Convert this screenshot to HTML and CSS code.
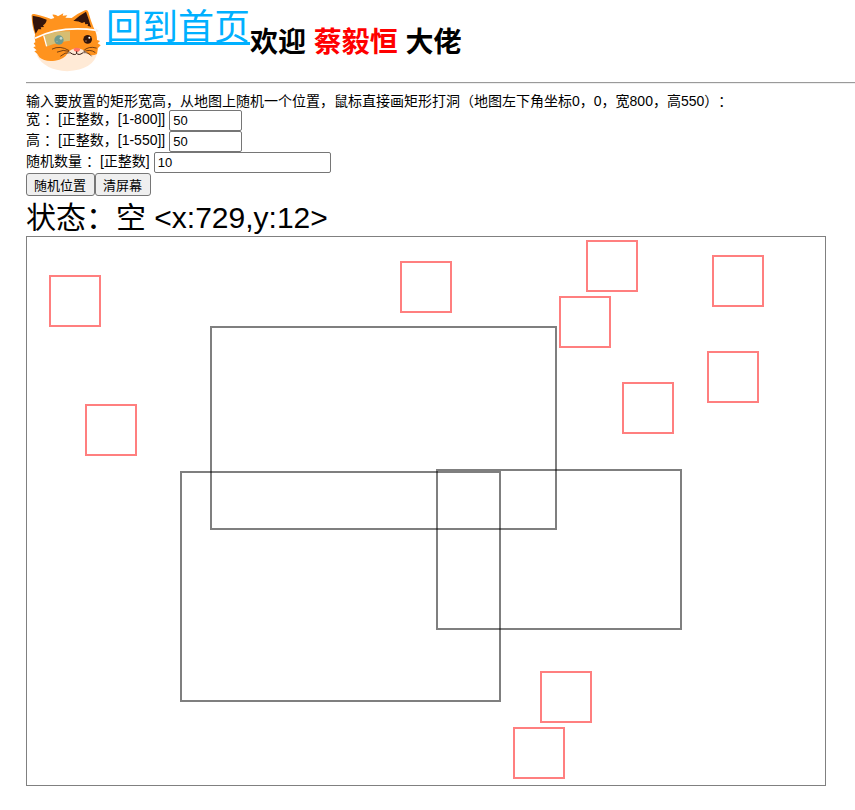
FILE: index.html
```html
<!DOCTYPE html>
<html lang="zh-CN">
<head>
<meta charset="utf-8">
<title>随机矩形</title>
<link rel="stylesheet" href="styles.css">
</head>
<body>
<header class="header">
  <svg class="avatar" viewBox="18 0 240 240" aria-hidden="true">
    <path fill="#ffead6" d="M50 165Q62 150 150 142Q220 140 231 160Q222 208 142 214Q72 210 50 165Z"/>
    <path fill="#ff931e" d="M35 50Q33 40 43 42Q75 50 93 57L103 54L97 44Q108 43 114 49L130 40L128 47L142 46L136 53L155 54Q170 42 195 31Q202 28 205 36Q213 65 221 83Q231 100 231 120L240 123L233 130L242 136L234 144L231 162Q215 170 204 162Q190 146 170 145Q151 147 144 158Q133 178 105 182Q74 186 58 172L52 162L43 154L50 151L40 142L47 139L41 130L46 127Q43 112 45 103Q36 80 35 50Z"/>
    <path fill="#35150c" d="M38 47Q60 50 80 59Q79 70 69 76L72 81L62 82L64 88L55 88L47 101Q37 72 38 47ZM160 63Q178 46 198 35Q208 61 213 82Q208 78 203 78L204 72L196 73L194 66L186 69Q175 62 160 63Z"/>
    <circle cx="203" cy="118" r="13" fill="#30150c"/><circle cx="208" cy="113" r="3" fill="#fff"/><circle cx="198" cy="123" r="2" fill="#b98f70"/>
    <path fill="#d7bd72" d="M72 107Q109 91 150 94V122Q117 125 82 139Z"/>
    <circle cx="117" cy="120" r="14" fill="#6f9b90"/><circle cx="123" cy="115" r="4" fill="#c9d8cc"/><circle cx="111" cy="124" r="2" fill="#a5bcb0"/>
    <path d="M45 115Q120 76 231 91" fill="none" stroke="#fff" stroke-width="5"/>
    <path d="M71 106L80 139" stroke="#fff" stroke-width="4"/>
    <path d="M226 84L237 93L229 97Z" fill="#f5f1f4"/>
    <path fill="#ff7468" d="M160 146Q170 141 181 146Q180 154 170 156Q161 154 160 146Z"/>
    <g fill="none" stroke="#30150c" stroke-linecap="round"><path stroke-width="3" d="M170 155V160Q165 168 152 159M170 160Q176 168 188 159"/><path stroke-width="2" d="M97 147Q120 135 146 151M112 156Q130 147 147 154M122 168Q134 156 151 158M191 152Q205 137 229 144M192 155Q210 146 225 157M191 158Q206 156 214 168"/></g>
  </svg>
  <a class="home" href="#">回到首页</a>
  <h1 class="welcome">欢迎 <span class="name">蔡毅恒</span> 大佬</h1>
</header>
<hr class="divider">
<main>
  <p class="intro">输入要放置的矩形宽高，从地图上随机一个位置，鼠标直接画矩形打洞（地图左下角坐标0，0，宽800，高550）：</p>
  <div class="row"><label for="w">宽 ：[正整数，[1-800]]</label><input class="field short" id="w" type="text" value="50"></div>
  <div class="row"><label for="h">高 ：[正整数，[1-550]]</label><input class="field short" id="h" type="text" value="50"></div>
  <div class="row"><label for="n">随机数量 ：[正整数]</label><input class="field" id="n" type="text" value="10"></div>
  <div class="actions"><button class="btn" type="button">随机位置</button><button class="btn" type="button">清屏幕</button></div>
  <p class="status">状态：空 &lt;x:729,y:12&gt;</p>
  <svg class="map" viewBox="0 0 800 550">
    <rect class="frame" x="0.5" y="0.5" width="799" height="549"/>
    <g class="holes">
      <rect x="185" y="91" width="345" height="202"/>
      <rect x="155" y="236" width="319" height="229"/>
      <rect x="411" y="234" width="244" height="159"/>
    </g>
    <g class="placed">
      <rect x="24" y="40" width="50" height="50"/>
      <rect x="375" y="26" width="50" height="50"/>
      <rect x="561" y="5" width="50" height="50"/>
      <rect x="534" y="61" width="50" height="50"/>
      <rect x="687" y="20" width="50" height="50"/>
      <rect x="682" y="116" width="50" height="50"/>
      <rect x="597" y="147" width="50" height="50"/>
      <rect x="60" y="169" width="50" height="50"/>
      <rect x="515" y="436" width="50" height="50"/>
      <rect x="488" y="492" width="50" height="50"/>
    </g>
  </svg>
</main>
</body>
</html>
```
FILE: styles.css
```css
body {
  margin: 0;
  padding-left: 26px;
  background: #fff;
  color: #000;
  font: 14px/18px "Liberation Sans", "Noto Sans CJK SC", sans-serif;
  text-spacing-trim: space-all;
}
.header {
  display: flex;
  align-items: flex-start;
  height: 82px;
}
.avatar {
  width: 80px;
  height: 80px;
  flex: none;
}
.home {
  margin-top: 4px;
  color: #00b0ff;
  font-size: 36px;
  font-weight: 400;
  line-height: 48px;
  text-decoration: underline;
  text-decoration-thickness: 3px;
  text-decoration-skip-ink: none;
}
.welcome {
  margin: 24px 0 0;
  font-size: 28px;
  line-height: 38px;
}
.name { color: #f00; }
.divider {
  margin: 0 0 8px;
  border: 0 solid #eee;
  border-top: 1px solid #9a9a9a;
  border-bottom-width: 1px;
}
.intro { margin: 0; }
.row {
  display: flex;
  align-items: flex-start;
  gap: 4px;
  height: 21px;
}
.field {
  box-sizing: border-box;
  width: 177px;
  height: 21px;
  margin: 0;
  padding: 1px 3px;
  border: 1px solid #767676;
  border-radius: 2px;
  background: #fff;
  color: #000;
  font: 13px "Liberation Sans", "Noto Sans CJK SC", sans-serif;
}
.short { width: 73px; }
.actions { display: flex; }
.btn {
  box-sizing: border-box;
  height: 23px;
  margin: 0;
  padding: 0 8px 1px 7px;
  border: 1px solid #767676;
  border-radius: 3px;
  background: #efefef;
  color: #000;
  font: 13px "Liberation Sans", "Noto Sans CJK SC", sans-serif;
}
.status {
  margin: 0;
  padding-top: 4px;
  font-size: 30px;
  line-height: 36px;
}
.map {
  display: block;
  width: 100%;
  max-width: 800px;
}
.frame {
  fill: none;
  stroke: #808080;
}
.holes, .placed {
  fill: none;
  stroke-width: 2px;
  stroke-opacity: 0.5;
}
.holes { stroke: #000; }
.placed { stroke: #f00; }
```
